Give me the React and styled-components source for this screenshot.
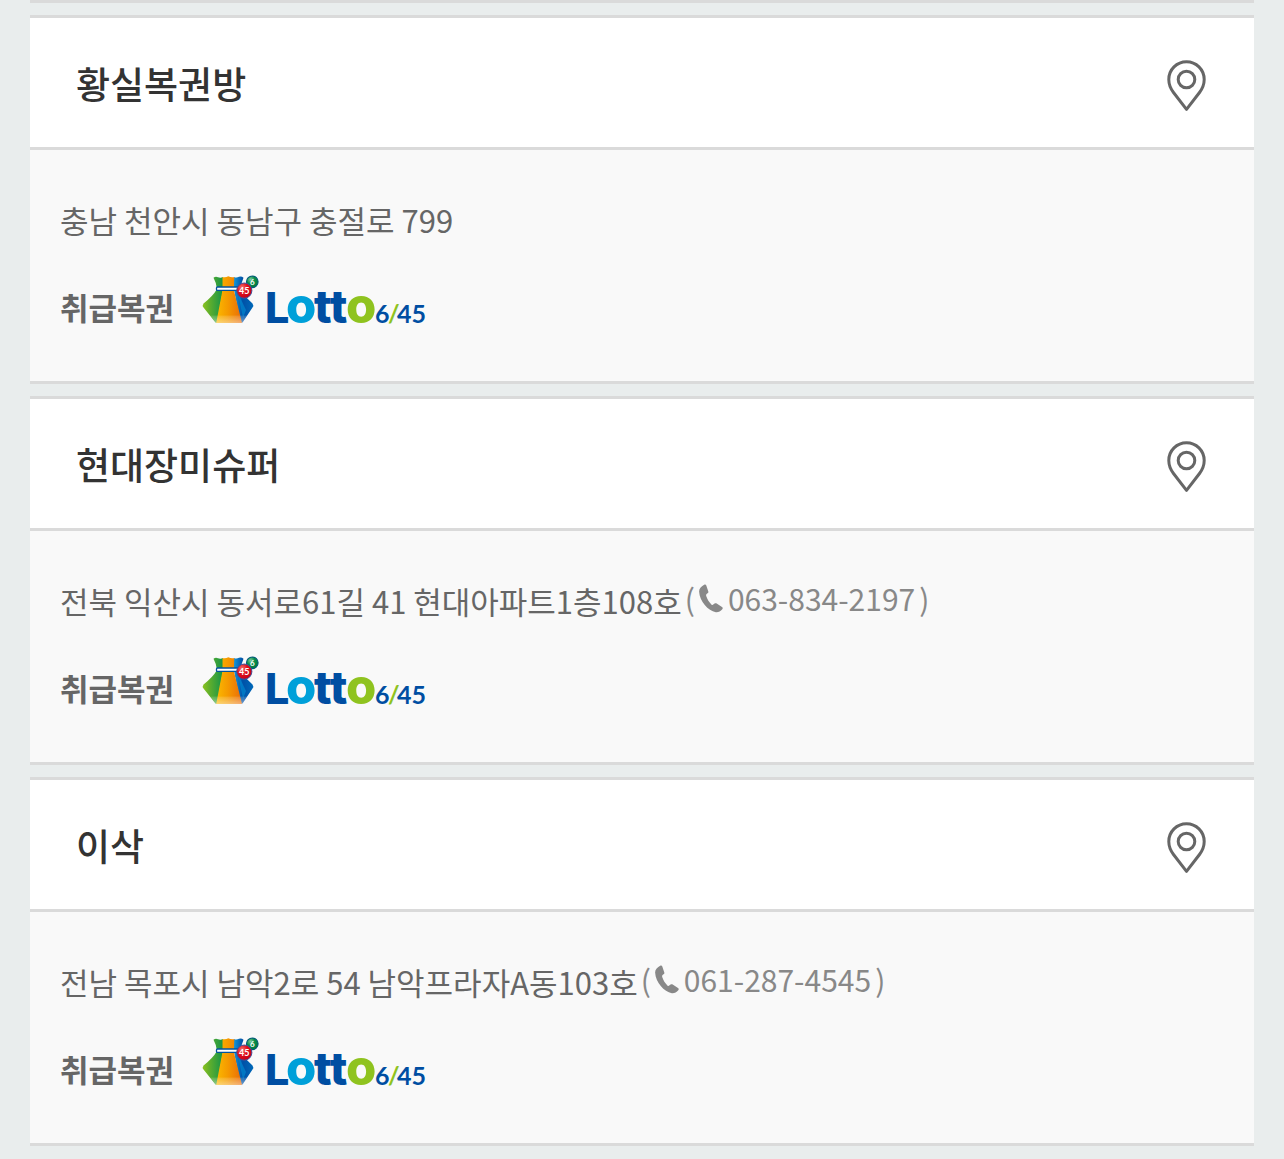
import styled, { createGlobalStyle } from 'styled-components';

const stores = [
  {
    id: 1,
    name: '황실복권방',
    address: '충남 천안시 동남구 충절로 799',
  },
  {
    id: 2,
    name: '현대장미슈퍼',
    address: '전북 익산시 동서로61길 41 현대아파트1층108호',
    phone: '063-834-2197',
  },
  {
    id: 3,
    name: '이삭',
    address: '전남 목포시 남악2로 54 남악프라자A동103호',
    phone: '061-287-4545',
  },
];

function PinIcon() {
  return (
    <svg width="40" height="52" viewBox="0 0 40 52" fill="none" stroke="#666" strokeWidth="3" aria-hidden="true">
      <path d="M19.5 49.3 L6.5 32.5 C3.5 28.5 1.8 24 1.8 19.5 C1.8 9.5 9.8 1.8 19.5 1.8 S37.2 9.5 37.2 19.5 C37.2 24 35.5 28.5 32.5 32.5 Z" strokeLinejoin="round" />
      <circle cx="19.5" cy="19.5" r="8.3" />
    </svg>
  );
}

function PhoneIcon() {
  return (
    <svg width="24" height="29" viewBox="0 0 24 29" fill="#888" aria-hidden="true">
      <path d="M5.2 .7 C6.1 .1 7 .5 7.3 1.4 L9.3 7.4 C9.5 8.3 9.2 8.9 8.5 9.3 L7.6 10.1 C7 10.7 7 11.5 7.3 12.3 C8.4 15.6 10 18 12.4 20.4 C13 21 13.6 21.1 14.2 20.6 L15.6 19.6 C16.3 19.1 17 19.1 17.7 19.5 L23 23.1 C23.9 23.7 24 24.5 23.3 25.3 C21.5 27.4 19.5 28.5 16.8 28.3 C9.2 27.1 .6 17.5 .1 7.6 C.1 4.3 2.6 2.1 5.2 .7 Z" />
    </svg>
  );
}

function LottoLogo() {
  return (
    <svg width="224" height="50" viewBox="0 0 224 50" role="img" aria-label="Lotto 6/45">
      <defs>
        <linearGradient id="bag-green" x1="0" y1="0" x2="1" y2="0">
          <stop offset="0" stopColor="#8cc220" />
          <stop offset=".35" stopColor="#5eae2d" />
          <stop offset="1" stopColor="#159447" />
        </linearGradient>
        <linearGradient id="bag-orange" x1="0" y1="0" x2="1" y2="0">
          <stop offset="0" stopColor="#fbb900" />
          <stop offset=".45" stopColor="#f59a00" />
          <stop offset="1" stopColor="#e96b09" />
        </linearGradient>
        <linearGradient id="bag-blue" x1="0" y1="0" x2="1" y2="0">
          <stop offset="0" stopColor="#1595d8" />
          <stop offset=".45" stopColor="#0050a6" />
          <stop offset="1" stopColor="#0069b9" />
        </linearGradient>
        <linearGradient id="bag-shine" x1="0" y1="0" x2="0" y2="1">
          <stop offset="0" stopColor="#fff" stopOpacity=".12" />
          <stop offset="1" stopColor="#fff" stopOpacity=".45" />
        </linearGradient>
        <radialGradient id="ball-red" cx=".35" cy=".3" r=".7">
          <stop offset="0" stopColor="#f27772" />
          <stop offset=".5" stopColor="#e1111b" />
          <stop offset="1" stopColor="#c50019" />
        </radialGradient>
        <radialGradient id="ball-green" cx=".35" cy=".3" r=".7">
          <stop offset="0" stopColor="#80c89b" />
          <stop offset=".5" stopColor="#098f49" />
          <stop offset="1" stopColor="#007a3c" />
        </radialGradient>
      </defs>
      <path d="M11.5 2.8 Q13.5 1 16 2.2 Q18.5 3.2 21 2 L21 15 L15.2 48 L13.5 47.5 L1.5 32.5 Q0 30.5 1.5 28.5 Q11 21 15 14 Q14 7 11.5 2.8 Z" fill="url(#bag-green)" />
      <path d="M32 2 Q34.5 3.2 37 1.8 Q39.5 1 41.5 2.8 Q39 8 38.5 15 Q43 22 50.5 28.5 Q52 30.5 50.5 32.5 L40.5 47.5 L38.5 48 L32 15 Z" fill="url(#bag-blue)" />
      <path d="M20.5 2 Q23.5 2.8 26.3 1.3 Q29.5 2.8 32.3 2 L31.8 15 L40 48 H14.2 L20.5 15 Z" fill="url(#bag-orange)" />
      <path d="M36 18 L44 35 L41 43 Z" fill="#0087cf" opacity=".7" />
      <path d="M8.4 40.5 H45 L40.5 48 H14 Z" fill="url(#bag-shine)" />
      <rect x="14.5" y="12" width="22" height="3.4" rx="1" fill="#fff" stroke="#00539f" strokeWidth="1.3" />
      <circle cx="50.3" cy="6.8" r="5.8" fill="url(#ball-green)" stroke="#005b78" strokeWidth="1.1" />
      <circle cx="42.3" cy="15.6" r="7.6" fill="url(#ball-red)" stroke="#40509b" strokeWidth="1" />
      <LogoNumber x="50.2" y="9.8" fontSize="8" fill="#fff" textAnchor="middle">6</LogoNumber>
      <LogoNumber x="42.3" y="19" fontSize="9" fill="#fff" textAnchor="middle">45</LogoNumber>
      <LogoText y="48" fill="#004ea2">
        <tspan x="63" fontSize="43">L</tspan>
        <tspan x="84" fontSize="49" fill="#00a0d9">o</tspan>
        <tspan x="112" fontSize="46">tt</tspan>
        <tspan x="144" fontSize="49" fill="#8fc31f">o</tspan>
      </LogoText>
      <LogoNumber y="48" fontSize="25" fill="#004ea2">
        <tspan x="173">6</tspan>
        <tspan x="186" fill="#8fc31f">/</tspan>
        <tspan x="195">45</tspan>
      </LogoNumber>
    </svg>
  );
}

function StoreCard({ store }) {
  return (
    <Card>
      <CardHeader>
        <StoreName>{store.name}</StoreName>
        <MapLink href="#map" aria-label={`${store.name} 지도`}>
          <PinIcon />
        </MapLink>
      </CardHeader>
      <CardBody>
        <Address>
          <span>{store.address}</span>
          {store.phone && (
            <Phone>
              (
              <PhoneLink href={`tel:${store.phone}`}>
                <PhoneIcon />
                {store.phone}
              </PhoneLink>
              )
            </Phone>
          )}
        </Address>
        <Products>
          <ProductsLabel>취급복권</ProductsLabel>
          <LottoLogo />
        </Products>
      </CardBody>
    </Card>
  );
}

export default function App() {
  return (
    <>
      <GlobalStyle />
      <Page>
        <PreviousEdge />
        {stores.map((store) => (
          <StoreCard key={store.id} store={store} />
        ))}
      </Page>
    </>
  );
}

const GlobalStyle = createGlobalStyle`
  * {
    box-sizing: border-box;
  }

  body {
    margin: 0;
    background: #e9eded;
    color: #666;
    font-family: "Noto Sans CJK KR", sans-serif;
    font-size: 31px;
    line-height: 44px;
  }

  a {
    color: inherit;
    text-decoration: none;
  }

  svg {
    display: block;
    flex-shrink: 0;
    overflow: visible;
  }
`;

const Page = styled.main`
  display: flex;
  flex-direction: column;
  gap: 12px;
  padding: 0 30px 12px;
`;

const PreviousEdge = styled.div`
  border-top: 3px solid #dadada;
`;

const Card = styled.article`
  border-block: 3px solid #dadada;
  background: #f9f9f9;
`;

const CardHeader = styled.header`
  display: flex;
  justify-content: space-between;
  align-items: flex-start;
  padding: 36px 47px 35px 46px;
  border-bottom: 3px solid #dadada;
  background: #fff;
`;

const StoreName = styled.h2`
  margin: 0;
  color: #333;
  font-size: 37px;
  font-weight: 500;
  line-height: 58px;
`;

const MapLink = styled.a`
  display: block;
  padding-top: 6px;
`;

const CardBody = styled.div`
  padding: 48px 30px 56px;
`;

const Address = styled.p`
  display: flex;
  flex-wrap: wrap;
  align-items: flex-start;
  column-gap: 3px;
  margin: 0;
`;

const Phone = styled.span`
  display: flex;
  align-items: center;
  gap: 4px;
  color: #888;
  font-size: 30px;
  line-height: 38px;
`;

const PhoneLink = styled.a`
  display: flex;
  align-items: center;
  gap: 5px;
`;

const Products = styled.div`
  display: flex;
  align-items: flex-end;
  gap: 28px;
  margin-top: 33px;
`;

const ProductsLabel = styled.strong`
  font-weight: 700;
  line-height: 36px;
`;

const LogoText = styled.text`
  font-family: Inter, sans-serif;
  font-weight: 800;
`;

const LogoNumber = styled.text`
  font-family: Lato, sans-serif;
  font-weight: 700;
`;
